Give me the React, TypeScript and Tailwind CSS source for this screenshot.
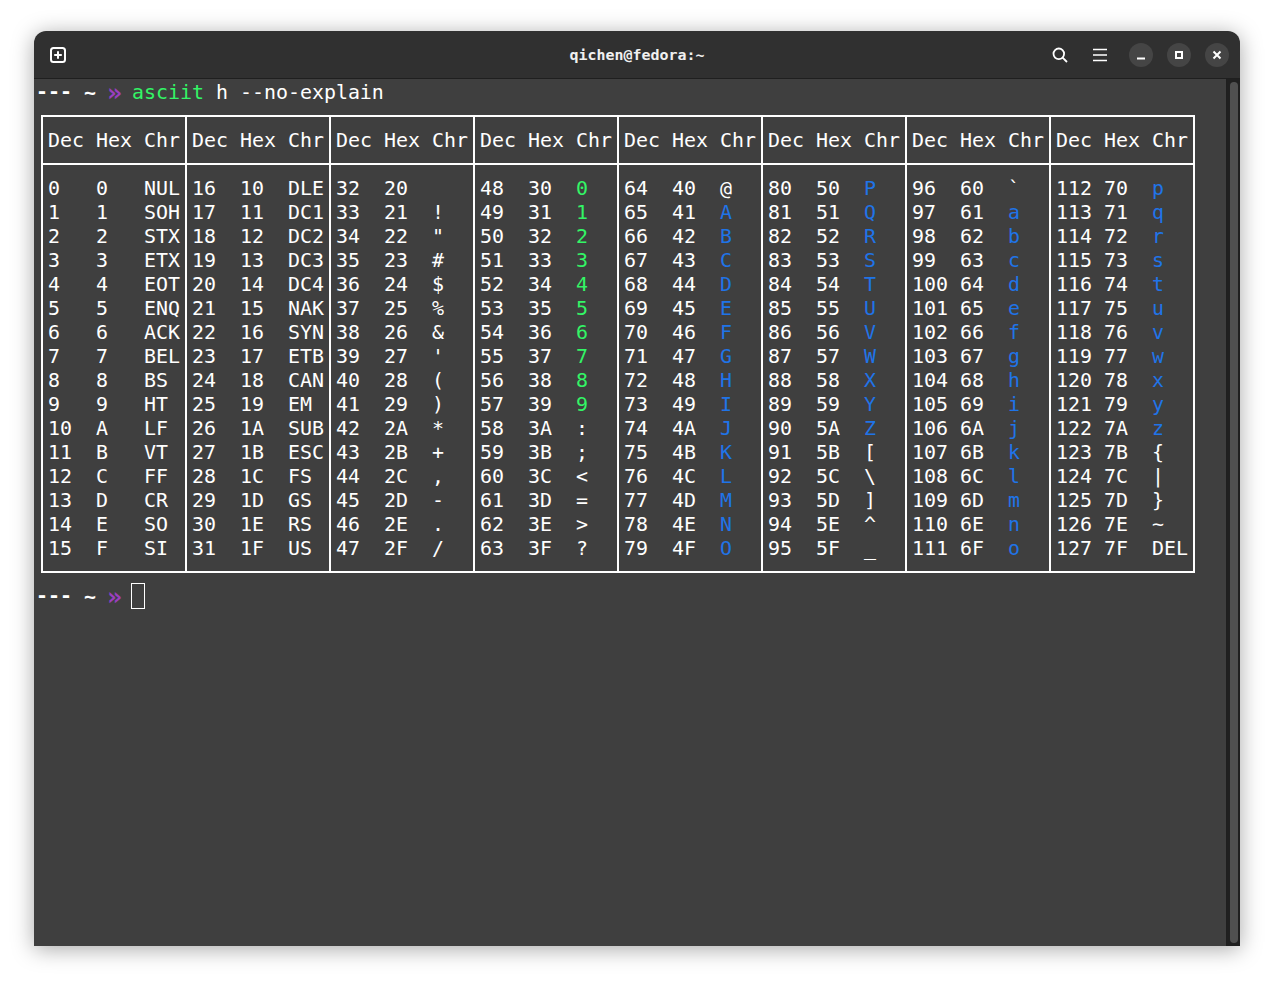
const HEX = (n: number) => n.toString(16).toUpperCase();
const CTRL = ["NUL","SOH","STX","ETX","EOT","ENQ","ACK","BEL","BS","HT","LF","VT","FF","CR","SO","SI","DLE","DC1","DC2","DC3","DC4","NAK","SYN","ETB","CAN","EM","SUB","ESC","FS","GS","RS","US"];
function chr(n: number) {
  if (n < 32) return CTRL[n];
  if (n === 32) return "\u00a0";
  if (n === 127) return "DEL";
  return String.fromCharCode(n);
}
function chrClass(n: number) {
  if (n >= 48 && n <= 57) return "text-[#33f566]";
  if ((n >= 65 && n <= 90) || (n >= 97 && n <= 122)) return "text-[#1f74e8]";
  return "text-white";
}
function Row({ a, b, c, cc }: { a: string; b: string; c: string; cc?: string }) {
  return (
    <div className="flex h-[24px]">
      <span className="w-[48px]">{a}</span>
      <span className="w-[48px]">{b}</span>
      <span className={cc ?? ""}>{c}</span>
    </div>
  );
}
function Col({ start, last }: { start: number; last?: boolean }) {
  return (
    <div className={`flex w-[144px] flex-col ${last ? "" : "border-r-2 border-white"}`}>
      <div className="border-b-2 border-white px-[5px] pt-[11px] pb-[11px]">
        <Row a="Dec" b="Hex" c="Chr" />
      </div>
      <div className="px-[5px] pt-[11px] pb-[11px]">
        {Array.from({ length: 16 }, (_, i) => {
          const n = start + i;
          return <Row key={n} a={String(n)} b={HEX(n)} c={chr(n)} cc={chrClass(n)} />;
        })}
      </div>
    </div>
  );
}
function Prompt() {
  return (
    <>
      <span className="inline-block -translate-y-px font-bold text-white">---</span> <span className="font-bold text-white">~</span>{" "}
      <span className="inline-block w-[12px] -translate-x-px translate-y-[2px] text-[25px] leading-[20px] font-bold text-[#9b3fc0]">»</span>{" "}
    </>
  );
}
export default function App() {
  return (
    <div className="min-h-[983px] bg-white pt-[31px] pl-[34px]">
      <div className="flex h-[915px] w-[1206px] flex-col overflow-hidden rounded-t-[12px] shadow-[0_3px_22px_rgba(0,0,0,0.35)]">
        <header className="flex h-[48px] shrink-0 items-center border-b border-[#1f1f1f] bg-[#303030]">
          <div className="flex flex-1 items-center">
            <svg className="ml-[16px]" width="16" height="16" viewBox="0 0 16 16" fill="none" stroke="white" strokeWidth="2">
              <rect x="1" y="1" width="14" height="14" rx="2.5" />
              <path d="M8 4.2v7.6M4.2 8h7.6" />
            </svg>
          </div>
          <div className="pt-[1px] font-['DejaVu_Sans_Mono',monospace] text-[14.95px] font-bold text-[#f0f0f0]">qichen@fedora:~</div>
          <div className="flex flex-1 items-center justify-end">
            <svg className="mr-[25px]" width="16" height="16" viewBox="0 0 16 16" fill="none" stroke="white" strokeWidth="1.8">
              <circle cx="6.8" cy="6.8" r="5.3" />
              <path d="M10.6 10.6l4.4 4.4" />
            </svg>
            <svg className="mr-[22px]" width="14" height="14" viewBox="0 0 14 14" stroke="white" strokeWidth="1.6">
              <path d="M0 1.5h14M0 7h14M0 12.5h14" />
            </svg>
            <div className="mr-[11px] flex gap-[14px]">
              <button className="flex h-[24px] w-[24px] items-center justify-center rounded-full bg-[#454545]">
                <svg width="10" height="10" viewBox="0 0 10 10"><rect x="1" y="7.5" width="8" height="2" fill="white" /></svg>
              </button>
              <button className="flex h-[24px] w-[24px] items-center justify-center rounded-full bg-[#454545]">
                <svg width="10" height="10" viewBox="0 0 10 10" fill="none" stroke="white" strokeWidth="2"><rect x="2" y="2" width="6" height="6" /></svg>
              </button>
              <button className="flex h-[24px] w-[24px] items-center justify-center rounded-full bg-[#454545]">
                <svg width="10" height="10" viewBox="0 0 10 10" stroke="white" strokeWidth="2"><path d="M1.5 1.5l7 7M8.5 1.5l-7 7" /></svg>
              </button>
            </div>
          </div>
        </header>
        <div className="flex min-h-0 flex-1 bg-[#3f3f3f]">
          <main className="min-w-0 flex-1 pt-[1px] pl-[2px] font-['DejaVu_Sans_Mono',monospace] text-[19.93px] leading-[26px] whitespace-pre text-white">
            <div className="h-[24px]">
              <Prompt />
              <span className="text-[#33f566]">asciit</span> h --no-explain
            </div>
            <div className="mt-[11px] ml-[5px] flex w-[1154px] border-2 border-white">
              {[0, 16, 32, 48, 64, 80, 96, 112].map((s) => (
                <Col key={s} start={s} last={s === 112} />
              ))}
            </div>
            <div className="mt-[11px] flex h-[24px]">
              <span><Prompt /></span>
              <span className="-my-px -ml-px h-[26px] w-[14px] border border-white" />
            </div>
          </main>
          <div className="flex w-[14px] shrink-0 justify-center border-l border-[#1f1f1f] bg-[#202020] py-[3px]">
            <div className="w-[8px] rounded-full bg-[#505050]" />
          </div>
        </div>
      </div>
    </div>
  );
}
